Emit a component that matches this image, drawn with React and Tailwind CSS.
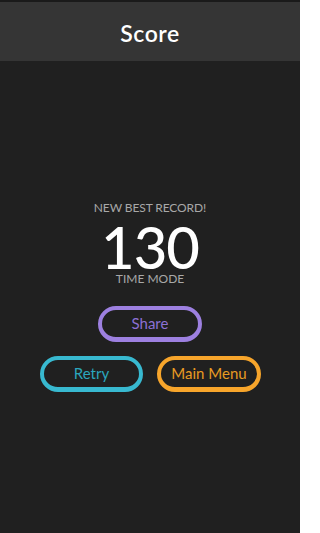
export default function App() {
  const font = { fontFamily: 'Lato, "Noto Sans", sans-serif' };
  return (
    <div className="w-[300px] h-[533px] overflow-hidden bg-[#202020] flex flex-col" style={font}>
      <div className="h-[61px] shrink-0 border-t-2 border-[#1a1a1a] bg-[#353535] flex items-center justify-center">
        <span className="text-white text-[23px] font-semibold tracking-[0.5px] leading-none mt-[3px]">Score</span>
      </div>
      <div className="flex flex-col items-center pt-[140px]">
        <div className="text-[#a8a8a8] text-[12px] leading-[14px] tracking-[-0.1px]">NEW BEST RECORD!</div>
        <div className="text-white text-[58px] leading-[44px] mt-[10px] tracking-[-1px] font-medium">130</div>
        <div className="text-[#a8a8a8] text-[12px] leading-[14px] mt-[3px]">TIME MODE</div>
        <button className="mt-[20px] w-[104px] h-[36px] rounded-full border-[4px] border-b-[5px] border-[#9d80e0] text-[#8c70d4] text-[15px] flex items-center justify-center">
          Share
        </button>
        <div className="flex gap-[14px] mt-[14px] ml-[1px]">
          <button className="w-[103px] h-[36px] rounded-full border-[4px] border-b-[5px] border-[#38b9d0] text-[#2ba6bd] text-[15px] flex items-center justify-center">
            Retry
          </button>
          <button className="w-[104px] h-[36px] rounded-full border-[4px] border-b-[5px] border-[#f7a52b] text-[#e89b22] text-[15px] flex items-center justify-center">
            Main Menu
          </button>
        </div>
      </div>
    </div>
  );
}
